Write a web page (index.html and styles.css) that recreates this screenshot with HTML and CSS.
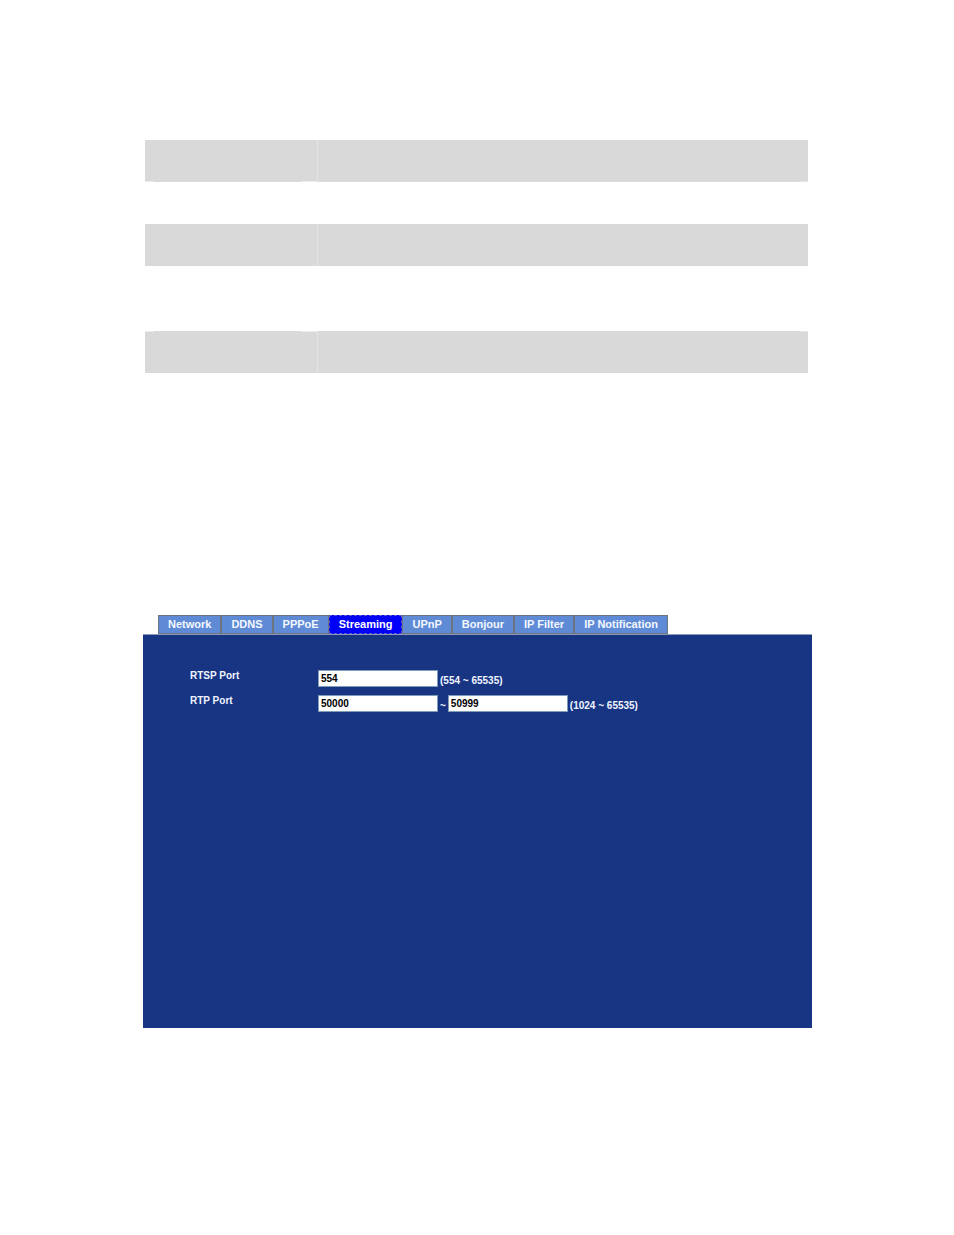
FILE: index.html
```html
<!DOCTYPE html>
<html lang="en">
<head>
    <meta charset="UTF-8">
    <meta name="viewport" content="width=device-width, initial-scale=1.0">
    <title>Streaming</title>
    <link rel="stylesheet" href="styles.css">
</head>
<body>
    <div class="page">
        <table class="bands">
            <tr class="shaded notch-bottom"><td class="name"></td><td></td></tr>
            <tr><td class="name"></td><td></td></tr>
            <tr class="shaded"><td class="name"></td><td></td></tr>
            <tr class="tall"><td class="name"></td><td></td></tr>
            <tr class="shaded notch-top"><td class="name"></td><td></td></tr>
        </table>

        <div class="settings">
            <nav class="tabs">
                <a class="tab" href="#network">Network</a>
                <a class="tab" href="#ddns">DDNS</a>
                <a class="tab" href="#pppoe">PPPoE</a>
                <a class="tab active" href="#streaming">Streaming</a>
                <a class="tab" href="#upnp">UPnP</a>
                <a class="tab" href="#bonjour">Bonjour</a>
                <a class="tab" href="#ipfilter">IP Filter</a>
                <a class="tab" href="#ipnotification">IP Notification</a>
            </nav>
            <form class="panel">
                <div class="row">
                    <label class="label" for="rtsp">RTSP Port</label>
                    <input class="port" type="text" id="rtsp" value="554">
                    <span class="hint">(554 ~ 65535)</span>
                </div>
                <div class="row">
                    <label class="label" for="rtp-start">RTP Port</label>
                    <input class="port" type="text" id="rtp-start" value="50000">
                    <span class="hint">~</span>
                    <input class="port" type="text" id="rtp-end" aria-label="RTP Port end" value="50999">
                    <span class="hint">(1024 ~ 65535)</span>
                </div>
            </form>
        </div>
    </div>
</body>
</html>
```
FILE: styles.css
```css
body {
    margin: 0;
    background: #ffffff;
    font-family: "Liberation Sans", Arial, sans-serif;
}
.page {
    padding: 140px 142px 0 143px;
}

/* table rows above the settings */
.bands {
    width: calc(100% - 6px);
    margin: 0 4px 0 2px;
    border-collapse: collapse;
    table-layout: fixed;
}
.bands td {
    height: 42px;
    padding: 0;
}
.bands .tall td {
    height: 65px;
}
.bands .name {
    width: 173px;
}
.shaded td {
    background-color: #d9d9d9;
    background-repeat: no-repeat;
}
.shaded .name {
    background-image: linear-gradient(#e4e4e4, #e4e4e4);
    background-size: 1px 100%;
    background-position: right top;
}
/* light ticks at the cell corners */
.notch-bottom .name,
.notch-top .name {
    background-image: linear-gradient(#e4e4e4, #e4e4e4), linear-gradient(#ebebeb, #ebebeb), linear-gradient(#ebebeb, #ebebeb);
    background-size: 1px 100%, 9px 1px, 17px 1px;
}
.notch-bottom .name {
    background-position: right top, left bottom, right bottom;
}
.notch-top .name {
    background-position: right top, left top, right top;
}
.notch-bottom td:last-child,
.notch-top td:last-child {
    background-image: linear-gradient(#e6e6e6, #e6e6e6);
    background-size: 8px 1px;
}
.notch-bottom td:last-child {
    background-position: right bottom;
}
.notch-top td:last-child {
    background-position: right top;
}

.settings {
    margin-top: 242px;
    font-weight: bold;
}
.tabs {
    display: flex;
    padding-left: 15px;
}
.tab {
    padding: 0 9px;
    border: 1px solid #6c7480;
    background: #5f8bd6;
    color: #f4f8ff;
    font-size: 11px;
    line-height: 17px;
    text-decoration: none;
    white-space: nowrap;
}
.tab.active {
    border: 1px dashed #5a5ac8;
    background: #0000fa;
    color: #ffffff;
}
.panel {
    display: flex;
    flex-direction: column;
    gap: 8px;
    box-sizing: border-box;
    min-height: 394px;
    padding: 35px 16px 16px 47px;
    border-top: 1px solid #8c9cb8;
    background: #183583;
    color: #f0f4ff;
    font-size: 10px;
}
.row {
    display: flex;
    align-items: flex-start;
    gap: 2px;
}
.label {
    width: 126px;
    line-height: 12px;
}
.hint {
    line-height: 12px;
    padding-top: 5px;
}
.port {
    box-sizing: border-box;
    width: 120px;
    height: 17px;
    padding: 0 2px;
    border: 1px solid #7f9db9;
    background: #ffffff;
    color: #000000;
    font-family: inherit;
    font-size: 10px;
    font-weight: bold;
}
```
